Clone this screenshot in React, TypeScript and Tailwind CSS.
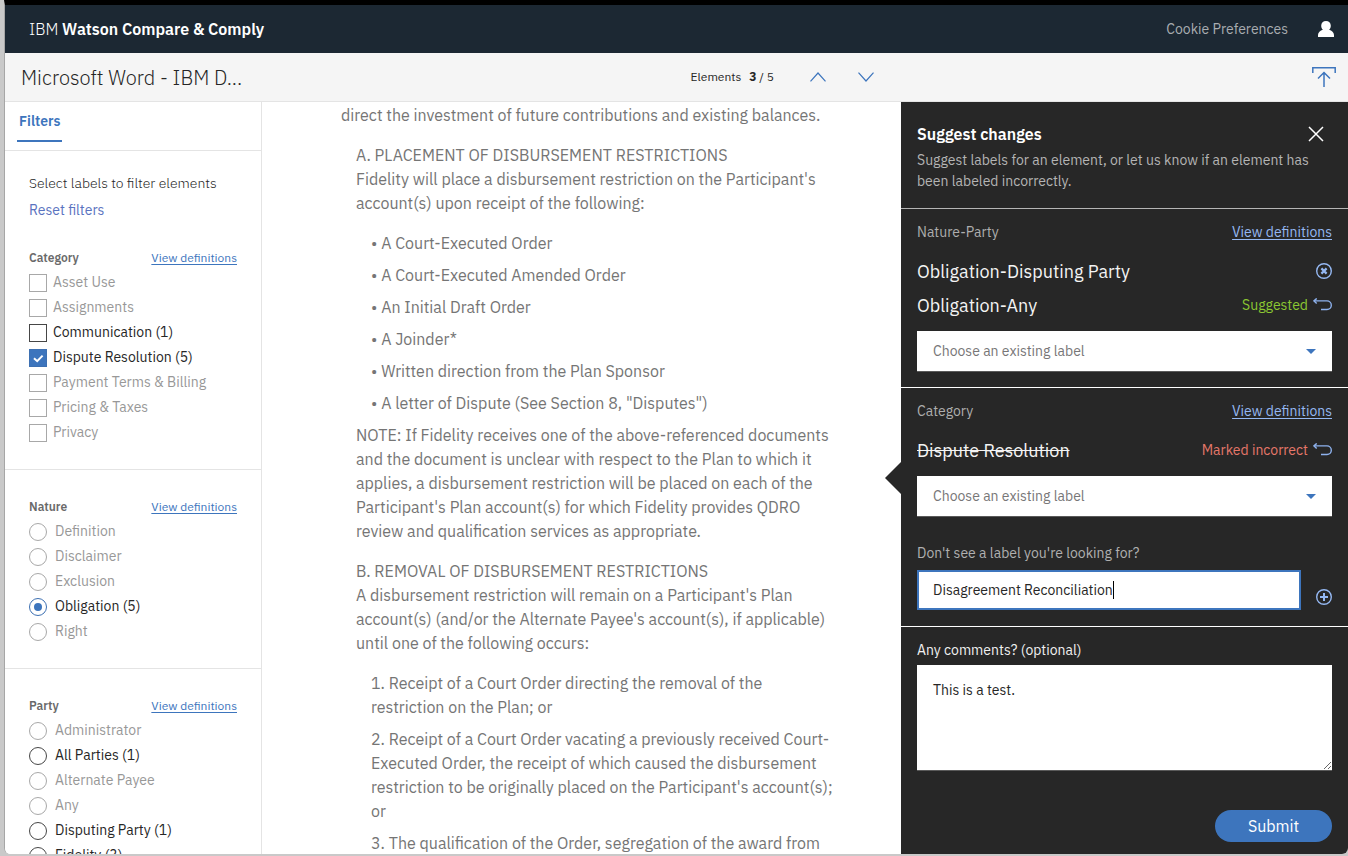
import { useState } from "react";

type Option = { label: string; active?: boolean; checked?: boolean };

const categories: Option[] = [
  { label: "Asset Use" },
  { label: "Assignments" },
  { label: "Communication (1)", active: true },
  { label: "Dispute Resolution (5)", active: true, checked: true },
  { label: "Payment Terms & Billing" },
  { label: "Pricing & Taxes" },
  { label: "Privacy" },
];

const natures: Option[] = [
  { label: "Definition" },
  { label: "Disclaimer" },
  { label: "Exclusion" },
  { label: "Obligation (5)", active: true, checked: true },
  { label: "Right" },
];

const parties: Option[] = [
  { label: "Administrator" },
  { label: "All Parties (1)", active: true },
  { label: "Alternate Payee" },
  { label: "Any" },
  { label: "Disputing Party (1)", active: true },
  { label: "Fidelity (3)", active: true },
];

function OptionText({ option }: { option: Option }) {
  return (
    <span className={`pb-[2px] text-sm ${option.active ? "text-[#262626]" : "text-[#989898]"}`}>{option.label}</span>
  );
}

function CheckRow({ option }: { option: Option }) {
  return (
    <li className="h-[25px]">
      <label className="flex h-full items-center gap-[6px]">
        <span className="grid size-[18px] shrink-0">
          <input
            type="checkbox"
            defaultChecked={option.checked}
            className={`peer col-start-1 row-start-1 size-[18px] appearance-none border checked:border-[#3d70b2] checked:bg-[#3d75bd] ${
              option.active ? "border-[#464646]" : "border-[#a8a8a8]"
            }`}
          />
          <svg
            viewBox="0 0 18 18"
            className="pointer-events-none col-start-1 row-start-1 hidden size-[18px] peer-checked:block"
            fill="none"
            stroke="#fff"
            strokeWidth="2"
          >
            <path d="M5 9.200 8.200 12.200 13.600 6.600" />
          </svg>
        </span>
        <OptionText option={option} />
      </label>
    </li>
  );
}

function RadioRow({ option, name }: { option: Option; name: string }) {
  return (
    <li className="h-[25px]">
      <label className="flex h-full items-center gap-2">
        <input
          type="radio"
          name={name}
          defaultChecked={option.checked}
          className={`grid size-[18px] shrink-0 appearance-none place-content-center rounded-full border before:size-2 before:rounded-full checked:border-[#3d70b2] checked:before:bg-[#3d75bd] ${
            option.active ? "border-[#464646]" : "border-[#a8a8a8]"
          }`}
        />
        <OptionText option={option} />
      </label>
    </li>
  );
}

function GroupHeader({ title }: { title: string }) {
  return (
    <div className="flex h-[25px] items-center justify-between text-xs">
      <h3 className="font-semibold text-[#6a6a6a]">{title}</h3>
      <a href="#definitions" className="text-[#3d75bd] underline underline-offset-2">
        View definitions
      </a>
    </div>
  );
}

function Lines({ lines }: { lines: string[] }) {
  return (
    <>
      {lines.map((line) => (
        <span key={line} className="block whitespace-nowrap">
          {line}
        </span>
      ))}
    </>
  );
}

const bullets = [
  "A Court-Executed Order",
  "A Court-Executed Amended Order",
  "An Initial Draft Order",
  "A Joinder*",
  "Written direction from the Plan Sponsor",
  'A letter of Dispute (See Section 8, "Disputes")',
];

const steps = [
  ["1. Receipt of a Court Order directing the removal of the", "restriction on the Plan; or"],
  [
    "2. Receipt of a Court Order vacating a previously received Court-",
    "Executed Order, the receipt of which caused the disbursement",
    "restriction to be originally placed on the Participant's account(s);",
    "or",
  ],
  ["3. The qualification of the Order, segregation of the award from"],
];

function Document() {
  return (
    <main className="min-w-0 flex-1 overflow-hidden bg-white pt-[1px] pl-[79px] text-base leading-6 text-[#757575]">
      <p className="mb-4">direct the investment of future contributions and existing balances.</p>
      <div className="pl-[15px]">
        <p className="mb-4">
          <Lines
            lines={[
              "A. PLACEMENT OF DISBURSEMENT RESTRICTIONS",
              "Fidelity will place a disbursement restriction on the Participant's",
              "account(s) upon receipt of the following:",
            ]}
          />
        </p>
        <ul className="pl-[15px]">
          {bullets.map((b) => (
            <li key={b} className="mb-2 whitespace-nowrap">
              • {b}
            </li>
          ))}
        </ul>
        <p className="mb-4">
          <Lines
            lines={[
              "NOTE: If Fidelity receives one of the above-referenced documents",
              "and the document is unclear with respect to the Plan to which it",
              "applies, a disbursement restriction will be placed on each of the",
              "Participant's Plan account(s) for which Fidelity provides QDRO",
              "review and qualification services as appropriate.",
            ]}
          />
        </p>
        <p className="mb-4">
          <Lines
            lines={[
              "B. REMOVAL OF DISBURSEMENT RESTRICTIONS",
              "A disbursement restriction will remain on a Participant's Plan",
              "account(s) (and/or the Alternate Payee's account(s), if applicable)",
              "until one of the following occurs:",
            ]}
          />
        </p>
        <ol className="pl-[15px]">
          {steps.map((s) => (
            <li key={s[0]} className="mb-2">
              <Lines lines={s} />
            </li>
          ))}
        </ol>
      </div>
    </main>
  );
}

function UndoButton() {
  return (
    <button type="button" aria-label="Undo" className="shrink-0">
      <svg width="19" height="14" viewBox="0 0 19 14" fill="none" stroke="#8eb2ee" strokeWidth="1.4">
        <path d="M1 2.900H14a4.200 4.200 0 0 1 0 8.600H8" />
        <path d="M3.700.4 1 2.900l2.700 2.700" />
      </svg>
    </button>
  );
}

function LabelSelect({ name }: { name: string }) {
  return (
    <div className="grid">
      <select
        aria-label={name}
        className="col-start-1 row-start-1 h-[41px] w-full appearance-none border-b border-[#5a5a5a] bg-white px-4 text-sm text-[#777677]"
      >
        <option>Choose an existing label</option>
      </select>
      <svg
        className="pointer-events-none col-start-1 row-start-1 mr-4 self-center justify-self-end"
        width="10"
        height="5"
        viewBox="0 0 10 5"
        fill="#3d75bd"
      >
        <path d="M0 0h10L5 5z" />
      </svg>
    </div>
  );
}

function PanelHeader({ title }: { title: string }) {
  return (
    <div className="flex h-5 items-center justify-between text-sm">
      <h3 className="text-[#aeaeae]">{title}</h3>
      <a href="#definitions" className="text-[#95b8f2] underline underline-offset-2">
        View definitions
      </a>
    </div>
  );
}

function SuggestPanel() {
  const [label, setLabel] = useState("Disagreement Reconciliation");
  return (
    <aside className="relative w-[447px] shrink-0 bg-[#272727]">
      <svg className="absolute top-[360px] -left-4" width="16" height="32" viewBox="0 0 16 32" fill="#272727">
        <path d="M16 0v32L0 16z" />
      </svg>

      <header className="h-[107px] border-b border-[#b5b5b5] px-4 pt-5">
        <div className="flex h-6 items-center justify-between pr-2">
          <h2 className="text-base font-semibold text-white">Suggest changes</h2>
          <button type="button" aria-label="Close">
            <svg width="16" height="16" viewBox="0 0 16 16" fill="none" stroke="#fff" strokeWidth="1.5">
              <path d="m1 1 14 14M15 1 1 15" />
            </svg>
          </button>
        </div>
        <p className="mt-1 text-sm leading-[21px] text-[#b4b4b4]">
          Suggest labels for an element, or let us know if an element has been labeled incorrectly.
        </p>
      </header>

      <section className="border-b border-white px-4 pt-[13px] pb-[15px]">
        <PanelHeader title="Nature-Party" />
        <ul className="mt-3 mb-[9px] text-lg text-[#f4f4f4]">
          <li className="flex h-[34px] items-center justify-between">
            <span className="pt-[2px]">Obligation-Disputing Party</span>
            <button type="button" aria-label="Remove label">
              <svg width="16" height="16" viewBox="0 0 16 16" fill="none" stroke="#95b8f2">
                <circle cx="8" cy="8" r="7.3" strokeWidth="1.4" />
                <path d="m5.400 5.400 5.200 5.200m0-5.200-5.200 5.200" strokeWidth="2.2" />
              </svg>
            </button>
          </li>
          <li className="flex h-[34px] items-center justify-between">
            <span className="pt-[2px]">Obligation-Any</span>
            <span className="flex items-center gap-[5px] text-sm text-[#8cc832]">
              Suggested <UndoButton />
            </span>
          </li>
        </ul>
        <LabelSelect name="Nature-Party label" />
      </section>

      <section className="border-b border-white px-4 pt-[13px] pb-4">
        <PanelHeader title="Category" />
        <div className="mt-3 mb-[9px] flex h-[34px] items-center justify-between text-lg text-[#f4f4f4]">
          <s className="pt-[2px]">Dispute Resolution</s>
          <span className="flex items-center gap-[5px] text-sm text-[#e5776a]">
            Marked incorrect <UndoButton />
          </span>
        </div>
        <LabelSelect name="Category label" />
        <label htmlFor="new-label" className="mt-[26px] block text-sm leading-5 text-[#b0b0b0]">
          Don't see a label you're looking for?
        </label>
        <div className="mt-[7px] flex items-end justify-between">
          <div className="relative w-[384px]">
            <input
              id="new-label"
              value={label}
              onChange={(e) => setLabel(e.target.value)}
              className="h-10 w-full border-2 border-[#3d75bd] bg-white px-[14px] text-sm text-[#262626] outline-none"
            />
            <span className="absolute top-[11px] left-[196px] h-[18px] w-px bg-black" />
          </div>
          <button type="button" aria-label="Add label" className="pb-[5px]">
            <svg width="16" height="16" viewBox="0 0 16 16" fill="none" stroke="#95b8f2">
              <circle cx="8" cy="8" r="7.3" strokeWidth="1.4" />
              <path d="M8 4v8M4 8h8" strokeWidth="2" />
            </svg>
          </button>
        </div>
      </section>

      <section className="px-4 pt-[13px]">
        <label htmlFor="comments" className="block text-sm leading-5 text-[#f0f0f0]">
          Any comments? (optional)
        </label>
        <textarea
          id="comments"
          defaultValue="This is a test."
          className="mt-[5px] block h-[106px] w-full border-b border-[#5a5a5a] bg-white px-4 py-[15px] text-sm text-[#262626] outline-none"
        />
        <div className="mt-[39px] flex justify-end">
          <button type="submit" className="h-8 w-[117px] rounded-full bg-[#3d75bd] text-base text-white">
            Submit
          </button>
        </div>
      </section>
    </aside>
  );
}

export default function App() {
  return (
    <div className="flex h-screen flex-col overflow-hidden bg-[#c9c9c9] pb-[2px] pl-[4px] font-['IBM_Plex_Sans',Roboto,sans-serif]">
      <div className="flex min-h-0 flex-1 flex-col overflow-hidden rounded-b-md border-t-[5px] border-l border-t-black border-l-[#a6a6a6] bg-white">
        <header className="flex h-12 shrink-0 items-center justify-between bg-[#1c2833] pr-[14px] pl-6">
          <h1 className="text-base text-white">
            <span className="font-light">IBM</span> <b className="font-semibold">Watson Compare &amp; Comply</b>
          </h1>
          <nav className="flex items-center gap-[30px]">
            <a href="#cookies" className="text-sm text-[#a9adb1]">
              Cookie Preferences
            </a>
            <button type="button" aria-label="Account">
              <svg width="16" height="16" viewBox="0 0 16 16" fill="#fff">
                <path d="M8 0C5.200 0 3.200 1.900 3.200 4.700c0 1.700.6 3 1.700 4C2.200 9.400 0 11.300 0 14v2h16v-2c0-2.700-2.200-4.600-4.900-5.300 1.100-1 1.700-2.300 1.700-4C12.800 1.900 10.800 0 8 0z" />
              </svg>
            </button>
          </nav>
        </header>

        <div className="flex h-[49px] shrink-0 items-center border-b border-[#e4e4e4] bg-[#f5f5f5] pl-4">
          <h2 className="pt-[2px] text-xl font-light text-[#262626]">Microsoft Word - IBM D...</h2>
          <div className="flex flex-1 items-center justify-end pr-[27px] text-xs text-[#262626]">
            <span>Elements</span>
            <span className="ml-2">
              <b>3</b> / 5
            </span>
            <button type="button" aria-label="Previous element" className="ml-9">
              <svg width="16" height="10" viewBox="0 0 16 10" fill="none" stroke="#3d75bd" strokeWidth="1.2">
                <path d="M.5 9.300 8 1l7.500 8.300" />
              </svg>
            </button>
            <button type="button" aria-label="Next element" className="ml-8">
              <svg width="16" height="10" viewBox="0 0 16 10" fill="none" stroke="#3d75bd" strokeWidth="1.2">
                <path d="M.5.700 8 9l7.500-8.300" />
              </svg>
            </button>
          </div>
          <div className="flex w-[447px] shrink-0 justify-end pr-3">
            <button type="button" aria-label="Upload">
              <svg width="24" height="20" viewBox="0 0 24 20" fill="none" stroke="#3d75bd" strokeWidth="1.5">
                <path d="M.8 6V.8h22.400V6M12 20V5.500M6 11.500l6-6 6 6" />
              </svg>
            </button>
          </div>
        </div>

        <div className="flex min-h-0 flex-1">
          <aside className="w-[257px] shrink-0 overflow-hidden border-r border-[#e4e4e4] bg-white">
            <div className="h-[49px] border-b border-[#e4e4e4] px-3">
              <button
                type="button"
                className="h-10 border-b-2 border-[#3d75bd] px-[2px] text-sm font-semibold text-[#3d75bd]"
              >
                Filters
              </button>
            </div>
            <section className="border-b border-[#e4e4e4] p-6">
              <p className="text-sm leading-4 font-light text-[#262626]">Select labels to filter elements</p>
              <button type="button" className="mt-[11px] mb-[27px] block text-sm leading-4 text-[#5a73c0]">
                Reset filters
              </button>
              <GroupHeader title="Category" />
              <ul>
                {categories.map((o) => (
                  <CheckRow key={o.label} option={o} />
                ))}
              </ul>
            </section>
            <section className="border-b border-[#e4e4e4] p-6">
              <GroupHeader title="Nature" />
              <ul>
                {natures.map((o) => (
                  <RadioRow key={o.label} option={o} name="nature" />
                ))}
              </ul>
            </section>
            <section className="p-6">
              <GroupHeader title="Party" />
              <ul>
                {parties.map((o) => (
                  <RadioRow key={o.label} option={o} name="party" />
                ))}
              </ul>
            </section>
          </aside>
          <Document />
          <SuggestPanel />
        </div>
      </div>
    </div>
  );
}
